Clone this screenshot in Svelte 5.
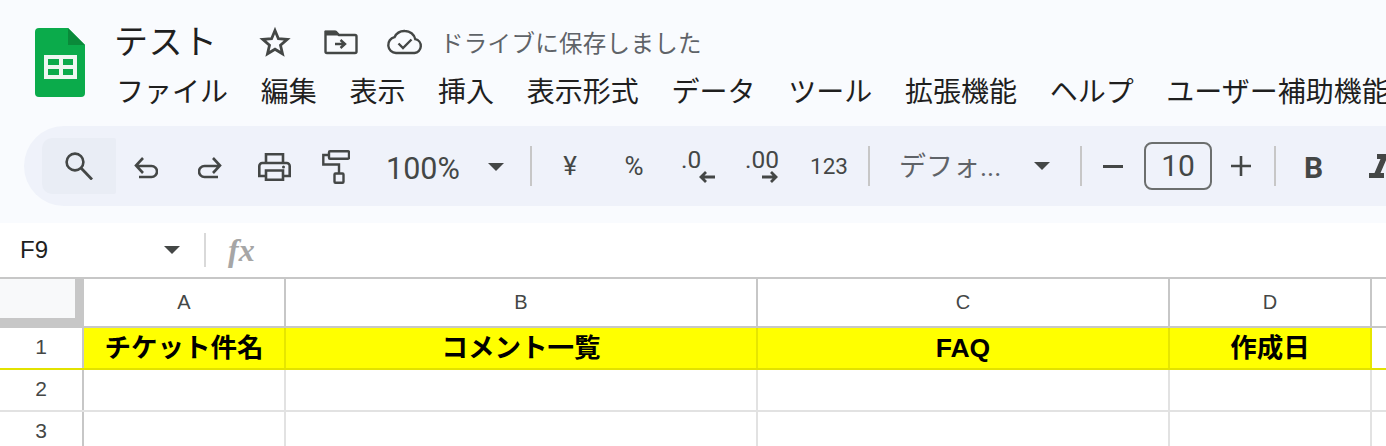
<script>
	const menus = ['ファイル', '編集', '表示', '挿入', '表示形式', 'データ', 'ツール', '拡張機能', 'ヘルプ', 'ユーザー補助機能'];
	const columns = [
		{ name: 'A', width: 202, title: 'チケット件名' },
		{ name: 'B', width: 472, title: 'コメント一覧' },
		{ name: 'C', width: 412, title: 'FAQ' },
		{ name: 'D', width: 202, title: '作成日' }
	];
</script>

<div class="page">
	<header class="top">
		<svg class="logo" width="50" height="69" viewBox="0 0 50 69">
			<path d="M4 0h29l17 17v48a4 4 0 0 1-4 4H4a4 4 0 0 1-4-4V4a4 4 0 0 1 4-4z" fill="#0bab4b" />
			<path d="M33 0l17 17H33z" fill="#0a8a3a" />
			<path d="M9 27h33v24H9z" fill="#eef7f1" />
			<path d="M13 31h11v6H13zM28 31h10v6H28zM13 41h11v6H13zM28 41h10v6H28z" fill="#0bab4b" />
		</svg>
		<div class="titles">
			<div class="title-row">
				<span class="doc-name">テスト</span>
				<svg class="star" width="32" height="32" viewBox="0 0 32 32"><path d="M16 4.500l3.400 8.200 8.800.7-6.700 5.800 2 8.600-7.500-4.600-7.500 4.600 2-8.600-6.700-5.800 8.800-.7z" fill="none" stroke="#444746" stroke-width="2.800" /></svg>
				<svg class="folder" width="34" height="26" viewBox="0 0 34 26">
					<path d="M2 3h10l3 3h16a1.500 1.500 0 0 1 1.500 1.500v15a1.500 1.500 0 0 1-1.500 1.500H3a1.500 1.500 0 0 1-1.500-1.500V3z" fill="none" stroke="#444746" stroke-width="2.400" />
					<path d="M1 1.500h10.500l4 5H1z" fill="#444746" />
					<path d="M11 15h9M16.500 11l4.500 4-4.500 4" fill="none" stroke="#444746" stroke-width="2.400" />
				</svg>
				<svg class="cloud" width="38" height="26" viewBox="0 0 38 26">
					<path d="M10 24a8 8 0 0 1-1.500-15.800A11 11 0 0 1 19 2a10.500 10.500 0 0 1 10.300 8.200A7 7 0 0 1 28.500 24z" fill="none" stroke="#444746" stroke-width="2.400" />
					<path d="M12.500 14.500l4.500 4.500 8.500-8.500" fill="none" stroke="#444746" stroke-width="2.400" />
				</svg>
				<span class="saved">ドライブに保存しました</span>
			</div>
			<nav class="menus">
				{#each menus as m}
					<span>{m}</span>
				{/each}
			</nav>
		</div>
	</header>

	<div class="toolbar">
		<div class="search">
			<svg width="28" height="28" viewBox="0 0 28 28"><circle cx="10" cy="10" r="8.400" fill="none" stroke="#444746" stroke-width="2.600" /><path d="M16 16l11 11.500" stroke="#444746" stroke-width="2.800" fill="none" /></svg>
		</div>
		<svg class="ico undo" width="24" height="22" viewBox="0 0 24 22"><path d="M9 1L2 8.500 9 16M2 9h15.500a5.500 5.500 0 0 1 0 11H5" fill="none" stroke="#444746" stroke-width="2.600" /></svg>
		<svg class="ico redo" width="24" height="22" viewBox="0 0 24 22"><path d="M15 1l7 7.500L15 16M22 9H6.500a5.500 5.500 0 0 0 0 11H20" fill="none" stroke="#444746" stroke-width="2.600" /></svg>
		<svg class="ico print" width="33" height="28" viewBox="0 0 33 28"><path d="M8 10V1.300h17V10M8 23H1.300V13a3 3 0 0 1 3-3h24.400a3 3 0 0 1 3 3v10H25M8 17.500h17v9.200H8z" fill="none" stroke="#444746" stroke-width="2.600" /><circle cx="25.500" cy="14" r="1.500" fill="#444746" /></svg>
		<svg class="ico roller" width="28" height="34" viewBox="0 0 28 34"><path d="M8 1.300h18a1 1 0 0 1 1 1v5.400a1 1 0 0 1-1 1H8a1 1 0 0 1-1-1V2.300a1 1 0 0 1 1-1zM6 5H1.300v9.500H17v9M13.500 23.500h7a1 1 0 0 1 1 1v7.200a1 1 0 0 1-1 1h-7a1 1 0 0 1-1-1v-7.200a1 1 0 0 1 1-1z" fill="none" stroke="#444746" stroke-width="2.400" /></svg>
		<span class="zoom-val">100%</span>
		<span class="caret zoom-caret"></span>
		<span class="sep first"></span>
		<span class="tool yen">¥</span>
		<span class="tool pct">%</span>
		<span class="dec less">
			<span class="digits">.0</span>
			<svg width="17" height="12" viewBox="0 0 17 12"><path d="M17 6H3M8 1L3 6l5 5" fill="none" stroke="#444746" stroke-width="2.800" /></svg>
		</span>
		<span class="dec more">
			<span class="digits">.00</span>
			<svg width="17" height="12" viewBox="0 0 17 12"><path d="M0 6h14M9 1l5 5-5 5" fill="none" stroke="#444746" stroke-width="2.800" /></svg>
		</span>
		<span class="tool num">123</span>
		<span class="sep second"></span>
		<span class="font-name">デフォ...</span>
		<span class="caret font-caret"></span>
		<span class="sep third"></span>
		<span class="minus"></span>
		<span class="size">10</span>
		<svg class="plus" width="20" height="20" viewBox="0 0 20 20"><path d="M10 0v20M0 10h20" stroke="#444746" stroke-width="2.600" /></svg>
		<span class="sep fourth"></span>
		<span class="bold">B</span>
		<svg class="italic" width="22" height="26" viewBox="0 0 22 26"><path d="M9 1h13v5h-3.500l-6 14H16v5H1v-5h5.500l6-14H9z" fill="#444746" /></svg>
	</div>

	<div class="formula">
		<span class="cell-ref">F9</span>
		<span class="caret ref-caret"></span>
		<span class="formula-sep"></span>
		<span class="fx">fx</span>
	</div>

	<div class="grid">
		<div class="row head">
			<div class="corner"><div class="corner-inner"></div></div>
			{#each columns as c}
				<div class="col-name" style="width: {c.width}px">{c.name}</div>
			{/each}
		</div>
		<div class="row first-row">
			<div class="row-name">1</div>
			{#each columns as c}
				<div class="title-cell" style="width: {c.width}px">{c.title}</div>
			{/each}
		</div>
		{#each [2, 3] as n}
			<div class="row body-row">
				<div class="row-name">{n}</div>
				{#each columns as c}
					<div class="cell" style="width: {c.width}px"></div>
				{/each}
			</div>
		{/each}
	</div>
</div>

<style>
	:global(body) {
		margin: 0;
		background: #fff;
	}

	.page {
		width: 1386px;
		height: 446px;
		overflow: hidden;
		font-family: Roboto, 'Noto Sans CJK JP', sans-serif;
		color: #444746;
		background: #f9fbfe;
	}

	.top {
		display: flex;
		height: 126px;
		box-sizing: border-box;
		padding: 28px 0 0 35px;
	}

	.logo {
		flex: none;
	}

	.titles {
		margin-left: 30px;
		min-width: 0;
		flex: 1;
		margin-top: -8px;
	}

	.title-row {
		display: flex;
		align-items: center;
		height: 44px;
	}

	.doc-name {
		font-size: 34px;
		line-height: 44px;
		color: #1f1f1f;
		width: 145px;
		margin-left: -1px;
		letter-spacing: 0.5px;
	}

	.folder {
		margin-left: 33px;
	}

	.cloud {
		margin-left: 28px;
	}

	.saved {
		margin-left: 16px;
		font-size: 23.500px;
		color: #5f6368;
		letter-spacing: 0.3px;
	}

	.menus {
		display: flex;
		gap: 32.700px;
		font-size: 28px;
		line-height: 40px;
		color: #1f1f1f;
		white-space: nowrap;
		margin-top: 9px;
		padding-left: 1px;
	}

	.toolbar {
		display: flex;
		align-items: center;
		height: 80px;
		margin-left: 24px;
		background: #eff2fa;
		border-radius: 40px 0 0 40px;
		overflow: hidden;
		white-space: nowrap;
	}

	.search {
		display: flex;
		align-items: center;
		justify-content: center;
		flex: none;
		width: 74px;
		height: 56px;
		margin-left: 18px;
		background: #e9edf5;
		border-radius: 10px 2px 2px 10px;
	}

	.ico {
		flex: none;
	}

	.undo {
		margin-left: 18px;
		margin-top: 4px;
	}

	.redo {
		margin-left: 40px;
		margin-top: 4px;
	}

	.print {
		margin-left: 36px;
		margin-top: 2px;
	}

	.roller {
		margin-left: 31px;
		margin-top: 2px;
	}

	.zoom-val {
		flex: none;
		margin-left: 36px;
		margin-top: 4px;
		font-size: 30.500px;
		width: 80px;
	}

	.caret {
		flex: none;
		width: 0;
		height: 0;
		border-left: 8px solid transparent;
		border-right: 8px solid transparent;
		border-top: 8px solid #444746;
	}

	.zoom-caret {
		margin-left: 22px;
		margin-top: 2px;
	}

	.sep {
		flex: none;
		width: 2px;
		height: 40px;
		background: #c7c7c7;
	}

	.first {
		margin-left: 26px;
	}

	.tool {
		flex: none;
		font-size: 26px;
		text-align: center;
	}

	.yen {
		margin-left: 26px;
		width: 24px;
	}

	.pct {
		margin-left: 39px;
		width: 26px;
	}

	.dec {
		display: flex;
		flex: none;
		flex-direction: column;
		align-items: flex-start;
		width: 34px;
		height: 40px;
	}

	.dec .digits {
		font-size: 24.500px;
		line-height: 26px;
		margin-top: 1px;
	}

	.dec svg {
		margin-top: -2px;
		align-self: flex-end;
	}

	.less {
		margin-left: 34px;
	}

	.more {
		margin-left: 30px;
	}

	.num {
		margin-left: 31px;
		width: 36px;
		font-size: 22.500px;
	}

	.second {
		margin-left: 22px;
	}

	.font-name {
		flex: none;
		margin-left: 29px;
		margin-bottom: 4px;
		width: 104px;
		font-size: 27px;
		color: #5f6368;
	}

	.font-caret {
		margin-left: 31px;
	}

	.third {
		margin-left: 30px;
	}

	.minus {
		flex: none;
		width: 20px;
		height: 3px;
		margin-left: 21px;
		background: #444746;
	}

	.size {
		flex: none;
		box-sizing: border-box;
		width: 68px;
		height: 48px;
		margin-left: 21px;
		border: 2px solid #6c6f6e;
		border-radius: 8px;
		font-size: 30px;
		line-height: 44px;
		text-align: center;
	}

	.plus {
		flex: none;
		margin-left: 19px;
	}

	.fourth {
		margin-left: 23px;
	}

	.bold {
		flex: none;
		margin-left: 28px;
		margin-top: 3px;
		font-size: 30px;
		font-weight: 700;
		width: 20px;
	}

	.italic {
		flex: none;
		margin-left: 44px;
	}

	.formula {
		display: flex;
		align-items: center;
		height: 54px;
		margin-top: 17px;
		border-bottom: 2px solid #c7c7c7;
		background: #fff;
	}

	.cell-ref {
		margin-left: 20px;
		width: 144px;
		font-family: 'Liberation Sans', sans-serif;
		font-size: 24px;
		color: #1f1f1f;
	}

	.formula-sep {
		width: 2px;
		height: 34px;
		margin-left: 24px;
		background: #d9d9d9;
	}

	.fx {
		margin-left: 22px;
		font-family: 'Liberation Serif', serif;
		font-style: italic;
		font-weight: 700;
		font-size: 32px;
		color: #a6a6a6;
	}

	.grid {
		background: #fff;
		height: 167px;
		font-family: 'Liberation Sans', sans-serif;
	}

	.row {
		display: flex;
	}

	.head {
		height: 47px;
		border-bottom: 2px solid #c7c7c7;
	}

	.corner {
		box-sizing: border-box;
		flex: none;
		width: 84px;
		background: #c7c7c7;
		padding: 0 9px 8px 0;
	}

	.corner-inner {
		height: 100%;
		background: #f8f9fa;
	}

	.col-name {
		box-sizing: border-box;
		border-right: 2px solid #c7c7c7;
		font-size: 20px;
		line-height: 47px;
		text-align: center;
		flex: none;
	}

	.first-row {
		height: 40px;
		border-bottom: 2px solid #e2e200;
		background: linear-gradient(#ffff00, #ffff00) 84px 0 / 1288px 100% no-repeat;
	}

	.row-name {
		box-sizing: border-box;
		flex: none;
		width: 84px;
		border-right: 2px solid #c7c7c7;
		font-size: 21px;
		line-height: 38px;
		text-align: center;
		background: #fff;
	}

	.title-cell {
		box-sizing: border-box;
		flex: none;
		border-right: 2px solid #e6e600;
		font-family: 'Liberation Sans', 'Noto Sans CJK JP', sans-serif;
		font-size: 26.500px;
		font-weight: 700;
		line-height: 40px;
		text-align: center;
		color: #000;
	}

	.body-row {
		height: 40px;
		border-bottom: 2px solid #e2e2e2;
	}

	.cell {
		box-sizing: border-box;
		flex: none;
		border-right: 2px solid #e2e2e2;
	}
</style>
